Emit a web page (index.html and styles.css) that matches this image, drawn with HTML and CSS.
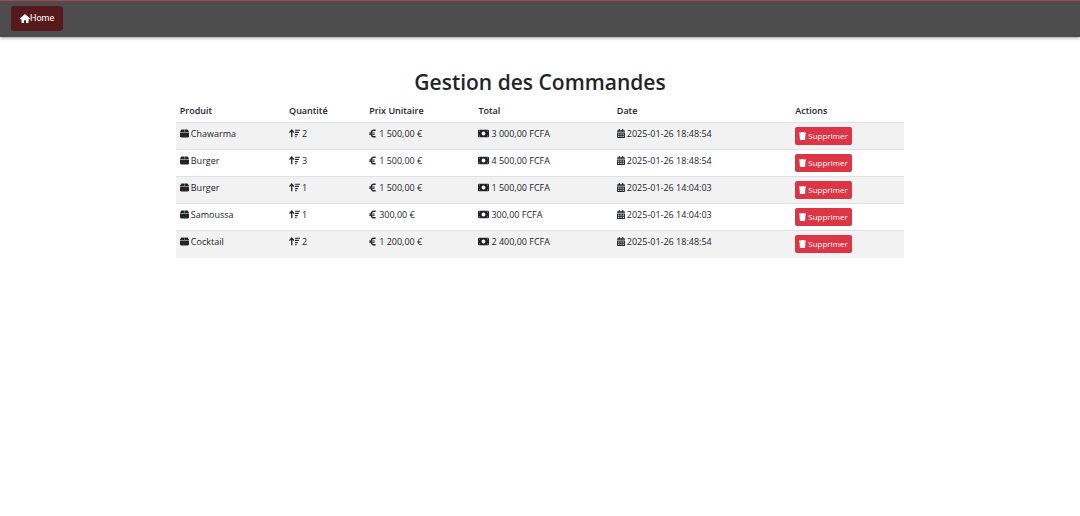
FILE: index.html
```html
<!DOCTYPE html>
<html lang="fr">
<head>
<meta charset="utf-8">
<title>Gestion des Commandes</title>
<link rel="stylesheet" href="styles.css">
</head>
<body>
<svg class="sprite" aria-hidden="true">
  <symbol id="home" viewBox="0 0 20 18"><path d="M10 0 20 9l-1 1.500h-2V17a1 1 0 0 1-1 1h-4v-5.500H8V18H4a1 1 0 0 1-1-1v-6.500H1L0 9z"/></symbol>
  <symbol id="box" viewBox="0 0 16 16"><path d="M3 1h4.700v4.500H0l1.500-3.500A1.600 1.600 0 0 1 3 1zM8.300 1H13a1.600 1.600 0 0 1 1.500 1L16 5.500H8.300zM0 6.200h16V13a2 2 0 0 1-2 2H2a2 2 0 0 1-2-2z"/></symbol>
  <symbol id="sort" viewBox="0 0 20 16"><path d="M5 0 10 5.500 8.500 7 6.200 4.800V15H3.800V4.800L1.500 7 0 5.500zM11 1h9v2h-9zM11 5h7v2h-7zM11 9h5v2h-5zM11 13h3v2h-3z"/></symbol>
  <symbol id="euro" viewBox="0 0 12 16"><path d="M11.500 1v2.500H9A4 4 0 0 0 5 6h5v1.500H4.500v1H10V10H5a4 4 0 0 0 4 2.500h2.500V15H9a6.600 6.600 0 0 1-6.500-5H0V8.500h2v-1H0V6h2.500A6.600 6.600 0 0 1 9 1z"/></symbol>
  <symbol id="money" viewBox="0 0 20 14"><path fill-rule="evenodd" d="M2 0h16a2 2 0 0 1 2 2v10a2 2 0 0 1-2 2H2a2 2 0 0 1-2-2V2a2 2 0 0 1 2-2zM10 3.500a3.500 3.500 0 1 0 0 7 3.500 3.500 0 0 0 0-7zM2 2v2L4 2zM18 2h-2L18 4zM2 12h2L2 10zM18 12V10L16 12z"/></symbol>
  <symbol id="calendar" viewBox="0 0 14 16"><path fill-rule="evenodd" d="M3 0h2v2h4V0h2v2h1.500A1.500 1.500 0 0 1 14 3.500V5H0V3.500A1.500 1.500 0 0 1 1.500 2H3zM0 6h14v8.500a1.500 1.500 0 0 1-1.500 1.500h-11A1.500 1.500 0 0 1 0 14.500zM2 8v2h2V8zM6 8v2h2V8zM10 8v2h2V8zM2 12v2h2v-2zM6 12v2h2v-2zM10 12v2h2v-2z"/></symbol>
  <symbol id="trash" viewBox="0 0 14 16"><path d="M4.500 0h5l.7 1H14v2H0V1h3.800zM1 3h12l-.7 11.600A1.500 1.500 0 0 1 10.800 16H3.200a1.500 1.500 0 0 1-1.500-1.400z"/></symbol>
</svg>
<header class="navbar">
  <a class="home-link" href="#"><svg class="home-icon" aria-hidden="true"><use href="#home"/></svg>Home</a>
</header>
<main class="container">
  <h1 class="title">Gestion des Commandes</h1>
  <table class="orders">
    <colgroup><col class="col-product"><col class="col-quantity"><col class="col-price"><col class="col-total"><col class="col-date"><col class="col-actions"></colgroup>
    <thead>
      <tr><th scope="col">Produit</th><th scope="col">Quantité</th><th scope="col">Prix Unitaire</th><th scope="col">Total</th><th scope="col">Date</th><th scope="col">Actions</th></tr>
    </thead>
    <tbody>
      <tr>
        <td><svg class="icon"><use href="#box"/></svg>Chawarma</td>
        <td><svg class="icon icon-wide"><use href="#sort"/></svg>2</td>
        <td><svg class="icon icon-euro"><use href="#euro"/></svg>1 500,00 €</td>
        <td><svg class="icon icon-wide"><use href="#money"/></svg>3 000,00 FCFA</td>
        <td><svg class="icon icon-date"><use href="#calendar"/></svg>2025-01-26 18:48:54</td>
        <td><button class="delete" type="button"><svg class="icon-trash"><use href="#trash"/></svg>Supprimer</button></td>
      </tr>
      <tr>
        <td><svg class="icon"><use href="#box"/></svg>Burger</td>
        <td><svg class="icon icon-wide"><use href="#sort"/></svg>3</td>
        <td><svg class="icon icon-euro"><use href="#euro"/></svg>1 500,00 €</td>
        <td><svg class="icon icon-wide"><use href="#money"/></svg>4 500,00 FCFA</td>
        <td><svg class="icon icon-date"><use href="#calendar"/></svg>2025-01-26 18:48:54</td>
        <td><button class="delete" type="button"><svg class="icon-trash"><use href="#trash"/></svg>Supprimer</button></td>
      </tr>
      <tr>
        <td><svg class="icon"><use href="#box"/></svg>Burger</td>
        <td><svg class="icon icon-wide"><use href="#sort"/></svg>1</td>
        <td><svg class="icon icon-euro"><use href="#euro"/></svg>1 500,00 €</td>
        <td><svg class="icon icon-wide"><use href="#money"/></svg>1 500,00 FCFA</td>
        <td><svg class="icon icon-date"><use href="#calendar"/></svg>2025-01-26 14:04:03</td>
        <td><button class="delete" type="button"><svg class="icon-trash"><use href="#trash"/></svg>Supprimer</button></td>
      </tr>
      <tr>
        <td><svg class="icon"><use href="#box"/></svg>Samoussa</td>
        <td><svg class="icon icon-wide"><use href="#sort"/></svg>1</td>
        <td><svg class="icon icon-euro"><use href="#euro"/></svg>300,00 €</td>
        <td><svg class="icon icon-wide"><use href="#money"/></svg>300,00 FCFA</td>
        <td><svg class="icon icon-date"><use href="#calendar"/></svg>2025-01-26 14:04:03</td>
        <td><button class="delete" type="button"><svg class="icon-trash"><use href="#trash"/></svg>Supprimer</button></td>
      </tr>
      <tr>
        <td><svg class="icon"><use href="#box"/></svg>Cocktail</td>
        <td><svg class="icon icon-wide"><use href="#sort"/></svg>2</td>
        <td><svg class="icon icon-euro"><use href="#euro"/></svg>1 200,00 €</td>
        <td><svg class="icon icon-wide"><use href="#money"/></svg>2 400,00 FCFA</td>
        <td><svg class="icon icon-date"><use href="#calendar"/></svg>2025-01-26 18:48:54</td>
        <td><button class="delete" type="button"><svg class="icon-trash"><use href="#trash"/></svg>Supprimer</button></td>
      </tr>
    </tbody>
  </table>
</main>
</body>
</html>
```
FILE: styles.css
```css
* { box-sizing: border-box; }
body {
  margin: 0;
  background: #fff;
  color: #212529;
  font-family: "Segoe UI", "Open Sans", "Noto Sans", sans-serif;
  font-size: 9px;
  line-height: 14px;
}
svg { fill: currentColor; }
.sprite { display: none; }
.navbar {
  display: flex;
  align-items: center;
  padding: 5px 11px 6px;
  border-top: 1px solid #a9484b;
  background: #4d4d4d;
  box-shadow: 0 1px 3px rgba(0, 0, 0, .4);
}
.home-link {
  display: flex;
  align-items: center;
  padding: 5px 9px;
  border-radius: 3px;
  background: #561a1d;
  color: #fff;
  font-family: Roboto, sans-serif;
  font-size: 9px;
  line-height: 15px;
  text-decoration: none;
}
.home-icon { width: 10px; height: 9px; }
.container {
  width: 68%;
  margin: 0 auto;
  padding: 32px 3px 0;
}
.title {
  margin: 0 0 4px;
  font-size: 21px;
  line-height: 27px;
  font-weight: 600;
  text-align: center;
}
.orders {
  width: 100%;
  border-collapse: collapse;
  table-layout: fixed;
}
.col-product { width: 15%; }
.col-quantity { width: 11%; }
.col-price { width: 15%; }
.col-total { width: 19%; }
.col-date { width: 24.5%; }
.col-actions { width: 15.5%; }
.orders th,
.orders td {
  padding: 4px;
  border-bottom: 1px solid #dee2e6;
  text-align: left;
  vertical-align: top;
  white-space: nowrap;
}
.orders th { font-weight: 600; }
.orders tbody tr:nth-child(odd) { background: #f2f2f2; }
.orders tbody tr:last-child td { border-bottom-color: #f2f2f2; }
.icon {
  width: 9px;
  height: 9px;
  margin-right: 2px;
  vertical-align: -1px;
}
.icon-wide { width: 11px; }
.icon-euro { width: 7px; margin-right: 3px; }
.icon-date { width: 8px; }
.delete {
  display: flex;
  align-items: center;
  gap: 2px;
  padding: 2px 4px;
  border: 0;
  border-radius: 2px;
  background: #dc3545;
  color: #fff;
  font: inherit;
  font-size: 8px;
}
.icon-trash { width: 7px; height: 8px; }
```
